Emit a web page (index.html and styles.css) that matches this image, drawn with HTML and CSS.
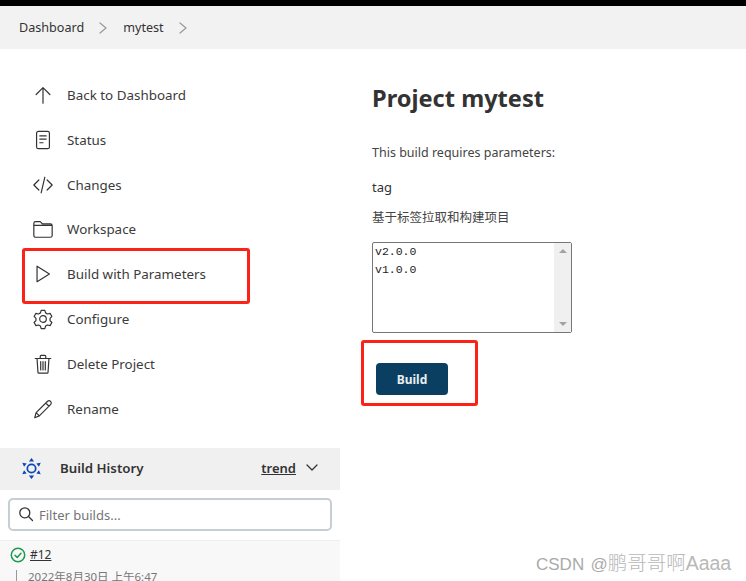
FILE: index.html
```html
<!DOCTYPE html>
<html lang="en">
<head>
<meta charset="utf-8">
<title>Project mytest</title>
<link rel="stylesheet" href="styles.css">
</head>
<body>
<div class="topbar"></div>
<nav class="crumbs">
  <span>Dashboard</span>
  <svg class="chev" viewBox="0 0 10 14"><path d="M2 2l6 5-6 5"/></svg>
  <span>mytest</span>
  <svg class="chev" viewBox="0 0 10 14"><path d="M2 2l6 5-6 5"/></svg>
</nav>
<div class="page">
  <aside class="side">
    <ul class="menu">
      <li><span class="ico"><svg viewBox="0 0 24 24"><path d="M12 21V4M4.500 11.500L12 4l7.500 7.500"/></svg></span>Back to Dashboard</li>
      <li><span class="ico"><svg viewBox="0 0 24 24"><rect x="5" y="2.500" width="14" height="19" rx="2"/><path d="M8.500 7.500h7M8.500 11h7M8.500 15h3.500"/></svg></span>Status</li>
      <li><span class="ico"><svg viewBox="0 0 24 24"><path d="M7.500 6.500L2 12l5.500 5.500M16.500 6.500L22 12l-5.500 5.500M14 3.500L10 20.500"/></svg></span>Changes</li>
      <li><span class="ico"><svg viewBox="0 0 24 24"><path d="M2 6a2 2 0 0 1 2-2h5l2.500 2.500H20a2 2 0 0 1 2 2V19a2 2 0 0 1-2 2H4a2 2 0 0 1-2-2zM2 8h20"/></svg></span>Workspace</li>
      <li><span class="ico"><svg viewBox="0 0 24 24"><path d="M5.500 3.500L19 12 5.500 20.500z"/></svg></span>Build with Parameters</li>
      <li><span class="ico"><svg viewBox="0 0 24 24"><circle cx="12" cy="12" r="3.600"/><path d="M10 2.500h4l.8 2.800 2.100 1.200 2.800-.7 2 3.400-2 2.100v2.400l2 2.100-2 3.400-2.800-.7-2.100 1.200-.8 2.800h-4l-.8-2.800-2.100-1.200-2.800.7-2-3.400 2-2.100v-2.400l-2-2.100 2-3.400 2.800.7 2.100-1.200z"/></svg></span>Configure</li>
      <li><span class="ico"><svg viewBox="0 0 24 24"><path d="M3.500 6h17M9 6V3.500a1 1 0 0 1 1-1h4a1 1 0 0 1 1 1V6M5.500 6l1 15a1 1 0 0 0 1 1h9a1 1 0 0 0 1-1l1-15M9.500 9.500v9M12 9.500v9M14.500 9.500v9"/></svg></span>Delete Project</li>
      <li><span class="ico"><svg viewBox="0 0 24 24"><path d="M3 21.500l1.500-5.500L17 3.500a2.500 2.500 0 0 1 3.500 3.500L8 19.500zM15 5.500L18.500 9M4.500 16L8 19.500"/></svg></span>Rename</li>
    </ul>
    <section class="history">
      <header class="hist-head">
        <svg class="sun" viewBox="0 0 24 24"><circle cx="12" cy="12" r="4.800"/><path class="tri" d="M12 0l3 4H9zM12 24l-3-4h6zM1.500 5.500l5 .8-3 3.700zM22.500 5.500l-2 4.500-3-3.700zM1.500 18.500l2-4.500 3 3.700zM22.500 18.500l-5-.8 3-3.700z"/></svg>
        <span class="hist-title">Build History</span>
        <a class="trend">trend</a>
        <svg class="down" viewBox="0 0 14 10"><path d="M2 2l5 5 5-5"/></svg>
      </header>
      <div class="filter-wrap">
        <div class="filter">
          <svg viewBox="0 0 16 16"><circle cx="6.800" cy="6.800" r="5"/><path d="M10.500 10.500L14.500 14.500"/></svg>
          <span>Filter builds...</span>
        </div>
      </div>
      <div class="build">
        <div class="build-id">
          <svg viewBox="0 0 16 16"><circle cx="8" cy="8" r="6.700"/><path d="M5 8.300l2.200 2.200L11 6.200"/></svg>
          <a>#12</a>
        </div>
        <div class="build-date">2022年8月30日 上午6:47</div>
      </div>
    </section>
  </aside>
  <main class="main">
    <h1>Project mytest</h1>
    <p class="req">This build requires parameters:</p>
    <p class="pname">tag</p>
    <p class="pdesc">基于标签拉取和构建项目</p>
    <div class="listbox">
      <div class="options"><div>v2.0.0</div><div>v1.0.0</div></div>
      <div class="scroll"><i class="up"></i><i class="dn"></i></div>
    </div>
    <div class="actions"><button class="btn">Build</button></div>
  </main>
</div>
<div class="red red-a"></div>
<div class="red red-b"></div>
<div class="mark"><span class="mark-latin">CSDN @</span>鹏哥哥啊Aaaa</div>
</body>
</html>
```
FILE: styles.css
```css
* { box-sizing: border-box; }
html, body { margin: 0; height: 581px; overflow: hidden; }
body { position: relative; background: #fff; color: #333; font: 13px/18px "Noto Sans", "Noto Sans CJK SC", sans-serif; }
svg { display: block; fill: none; stroke: #333; stroke-width: 1.3; stroke-linecap: round; stroke-linejoin: round; }
.topbar { height: 6px; background: #000; }
.crumbs { height: 43px; background: #f2f2f2; display: flex; align-items: center; padding-left: 19px; color: #333; font-size: 12.600px; }
.chev { width: 10px; height: 14px; margin: 0 15px 0 14px; stroke: #999; stroke-width: 1.2; }
.page { display: flex; }
.side { width: 340px; flex: none; }
.menu { list-style: none; margin: 0; padding: 23.700px 0 0; }
.menu li { height: 44.800px; display: flex; align-items: center; padding-left: 32px; color: #3b3b3b; font-size: 13.400px; }
.ico { width: 22px; margin-right: 13px; display: block; }
.ico svg { width: 22px; height: 22px; }
.history { margin-top: 16.900px; }
.hist-head { height: 42px; padding: 0 0 1px 21px; background: #f0f0f0; display: flex; align-items: center; font-weight: 600; color: #333; }
.sun { width: 21px; height: 21px; margin-right: 18px; stroke: #0d47b5; stroke-width: 2; }
.sun .tri { fill: #0d47b5; stroke: none; }
.hist-title { flex: 1; font-size: 13.300px; }
.trend { text-decoration: underline; }
.down { width: 14px; height: 10px; margin: 0 21px 0 9px; stroke-width: 1.3; }
.filter-wrap { padding: 8px 8px 9px; background: #fff; }
.filter { height: 33px; border: 2px solid #c5ced3; border-radius: 5px; display: flex; align-items: center; padding-left: 8px; color: #757575; background: #fff; }
.filter span { position: relative; top: 1px; }
.filter svg { width: 16px; height: 16px; margin-right: 5px; }
.build { background: #f8f8f8; border-top: 1px solid #eee; padding: 5px 10px 0; height: 50px; }
.build-id { display: flex; align-items: center; gap: 4px; font-size: 12px; }
.build-id svg { width: 16px; height: 16px; stroke: #1c9a4d; stroke-width: 1.5; }
.build-id a { text-decoration: underline; }
.build-date { margin: 6px 0 0 6px; padding-left: 11px; border-left: 1px solid #999; font-size: 11.500px; line-height: 14px; color: #777; }
.main { padding: 0 0 0 32px; flex: 1; }
h1 { margin: 32px 0 0; font-size: 23.600px; line-height: 34px; font-weight: 700; color: #333; }
.req { margin: 29px 0 0; color: #444; font-size: 12.500px; }
.pname { margin: 16px 0 0; color: #333; }
.pdesc { margin: 13px 0 0; color: #444; font-size: 12.500px; }
.listbox { margin-top: 15px; width: 200px; height: 91px; border: 1px solid #767676; border-radius: 2px; display: flex; font: 11.500px/18px "Liberation Mono", monospace; color: #222; }
.options { flex: 1; padding: 0 2px; }
.scroll { width: 17px; background: #f0f0f0; display: flex; flex-direction: column; justify-content: space-between; align-items: center; padding: 6px 0; }
.scroll i { display: block; width: 0; height: 0; border-left: 4px solid transparent; border-right: 4px solid transparent; }
.up { border-bottom: 4px solid #a3a3a3; }
.dn { border-top: 4px solid #a3a3a3; }
.actions { margin: 30px 0 0 4px; }
.btn { display: block; width: 72px; height: 32px; padding: 0; border: 0; border-radius: 4px; background: #0b3f61; color: #e8eef2; font: 700 12px "Noto Sans", sans-serif; }
.red { position: absolute; border: 3px solid #fb2318; border-radius: 3px; }
.red-a { left: 22px; top: 248px; width: 228px; height: 56px; }
.red-b { left: 361px; top: 340px; width: 117px; height: 66px; }
.mark { position: absolute; left: 536px; top: 551px; font: 19.500px/24px "Liberation Sans", "Noto Sans CJK SC", sans-serif; font-weight: 300; color: #b8b8b8; white-space: nowrap; }
.mark-latin { font-size: 17px; word-spacing: 1.500px; color: #aaa; }
```
